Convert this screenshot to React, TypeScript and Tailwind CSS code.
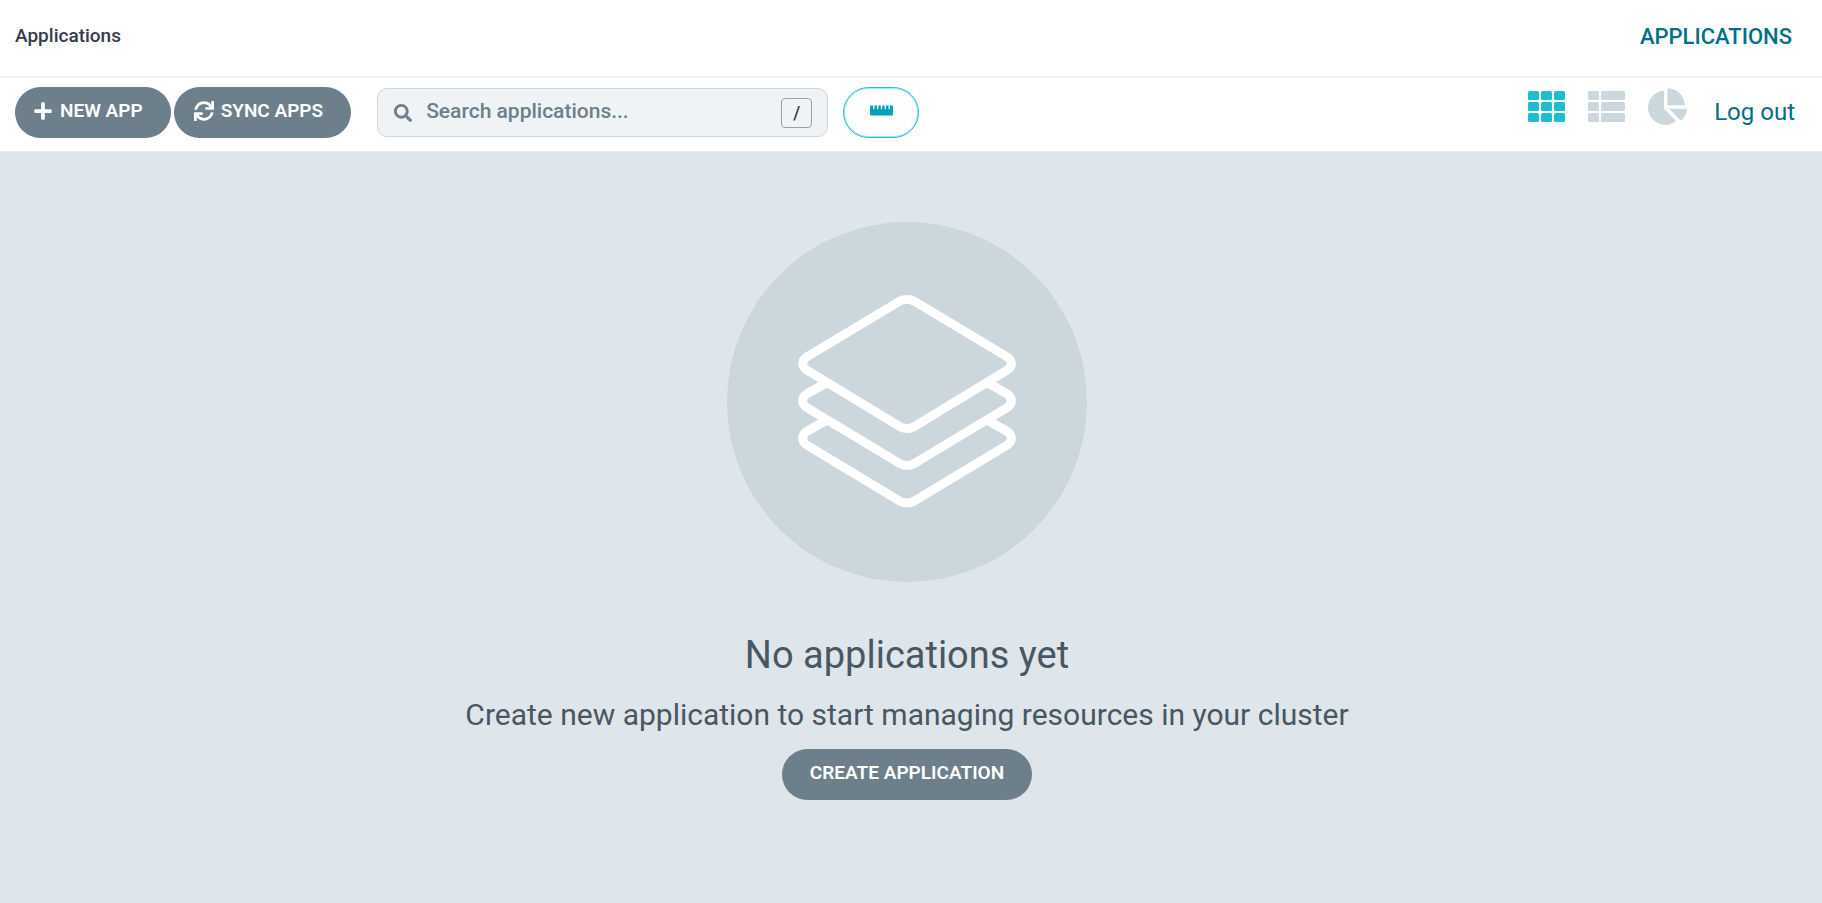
import { FaChartPie, FaPlus, FaRulerHorizontal, FaSearch, FaSync } from "react-icons/fa";

function GridIcon() {
  return (
    <svg width="37" height="32" viewBox="0 0 37 32" fill="currentColor" aria-hidden="true">
      {[0, 11, 22].map((y) =>
        [0, 13, 26].map((x) => <rect key={`${x}-${y}`} x={x} y={y} width="11" height="9" rx="1.500" />),
      )}
    </svg>
  );
}

function ListIcon() {
  return (
    <svg width="37" height="32" viewBox="0 0 37 32" fill="currentColor" aria-hidden="true">
      {[0, 11, 22].map((y) => (
        <g key={y}>
          <rect x="0" y={y} width="11" height="9" rx="1.500" />
          <rect x="13" y={y} width="24" height="9" rx="1.500" />
        </g>
      ))}
    </svg>
  );
}

function LayersIcon() {
  return (
    <svg width="360" height="360" viewBox="0 0 360 360" fill="none" stroke="white" strokeWidth="9" strokeLinejoin="round" aria-hidden="true">
      <path d="M173 79C177 77 183 77 187 79L279.500 134.500C286 138.500 286 144.500 279.500 148.500L186.500 205C182.500 206.800 177.500 206.800 173.500 205L80.500 148.500C74 144.500 74 138.500 80.500 134.500Z" />
      <path d="M100 160.500 80.500 171.500C74 175.500 74 182 80.500 186L173.500 242C177.500 243.800 182.500 243.800 186.500 242L279.500 186C286 182 286 175.500 279.500 171.500L260 160.500" />
      <path d="M100 198 80.500 209C74 213 74 219.500 80.500 223.500L173.500 279.500C177.500 281.300 182.500 281.300 186.500 279.500L279.500 223.500C286 219.500 286 213 279.500 209L260 198" />
    </svg>
  );
}

const pill =
  "flex h-[51px] shrink-0 items-center rounded-full bg-[#6d7f8b] pb-[3px] text-[19px] leading-6 font-semibold text-white";

export default function App() {
  return (
    <div className="flex min-h-screen flex-col bg-[#dee6eb] font-['Roboto',sans-serif] text-[#495763]">
      <header className="flex h-[78px] items-center justify-between border-b-2 border-[#eff3f6] bg-white pr-[30px] pb-1 pl-[15px]">
        <nav aria-label="Breadcrumb" className="text-[19px] font-medium text-[#363c4a]">
          Applications
        </nav>
        <h1 className="text-[22px] font-medium text-[#006f8a]">APPLICATIONS</h1>
      </header>

      <div className="flex h-[74px] items-start justify-between border-b border-[#e6ecf0] bg-white pt-[9px] pr-[27px] pl-[15px]">
        <div className="flex items-center">
          <button type="button" className={`${pill} gap-[7px] pr-7 pl-[18px]`}>
            <FaPlus className="size-5" aria-hidden="true" />
            NEW APP
          </button>
          <button type="button" className={`${pill} ml-[3px] gap-[7px] pr-7 pl-5`}>
            <FaSync className="size-5" aria-hidden="true" />
            SYNC APPS
          </button>
          <label className="ml-[26px] flex h-[49px] w-[451px] items-center rounded-[10px] border border-[#ccd6dd] bg-[#eff3f6] pr-[15px] pl-4">
            <FaSearch className="size-[18px] text-[#6d7f8b]" aria-hidden="true" />
            <input
              type="text"
              aria-label="Search applications"
              placeholder="Search applications..."
              className="ml-3.5 min-w-0 flex-1 bg-transparent pb-[3px] text-[21px] leading-7 font-medium outline-none placeholder:text-[#6d7f8b]"
            />
            <kbd className="flex h-[30px] w-[31px] items-center justify-center rounded border border-[#8fa4b1] font-['Roboto',sans-serif] text-[18px] font-medium text-[#363c4a]">
              /
            </kbd>
          </label>
          <button
            type="button"
            aria-label="Toggle health status bar"
            className="ml-[15px] flex h-[51px] w-[76px] items-center justify-center rounded-full border border-[#1fbdd0] bg-white pb-1 text-[#00a2b3] ring-1 ring-[#1fbdd0]/40 ring-inset"
          >
            <FaRulerHorizontal className="size-[23px]" aria-hidden="true" />
          </button>
        </div>
        <div className="flex items-start">
          <button type="button" aria-label="Tiles" className="mt-1 text-[#1fbdd0]">
            <GridIcon />
          </button>
          <button type="button" aria-label="List" className="mt-1 ml-[23px] text-[#ccd6dd]">
            <ListIcon />
          </button>
          <button type="button" aria-label="Summary" className="mt-px ml-[23px] text-[#ccd6dd]">
            <FaChartPie className="h-[37px] w-[39px]" aria-hidden="true" />
          </button>
          <a href="#logout" className="mt-[9px] ml-[27px] text-[24px] leading-8 text-[#006f8a]">
            Log out
          </a>
        </div>
      </div>

      <main className="flex flex-1 flex-col items-center pt-[70px] pr-[8px] text-center">
        <div className="rounded-full bg-[#ccd6dd]">
          <LayersIcon />
        </div>
        <h2 className="mt-12 text-[38px] leading-[50px]">No applications yet</h2>
        <p className="mt-[15px] text-[30px] leading-10">
          Create new application to start managing resources in your cluster
        </p>
        <button type="button" className={`${pill} mt-3.5 px-7`}>
          CREATE APPLICATION
        </button>
      </main>
    </div>
  );
}
